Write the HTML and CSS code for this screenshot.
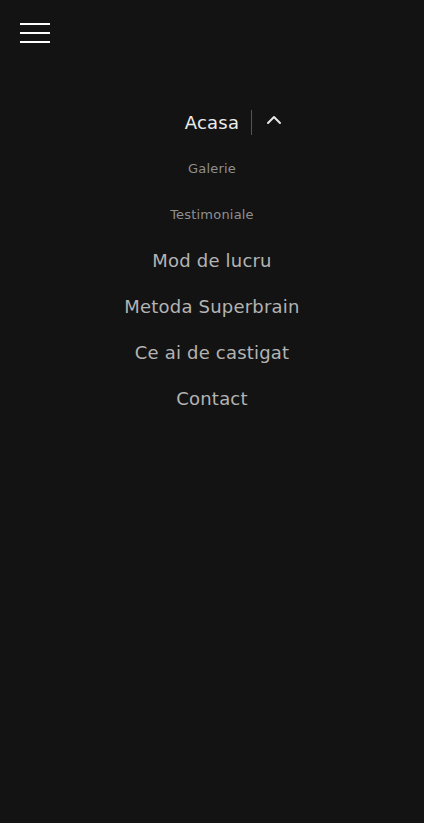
FILE: index.html
```html
<!DOCTYPE html>
<html lang="ro">
<head>
<meta charset="utf-8">
<title>Meniu</title>
<link rel="stylesheet" href="styles.css">
</head>
<body>
<header class="top">
  <button class="burger" aria-label="Meniu">
    <span></span><span></span><span></span>
  </button>
</header>
<nav class="menu">
  <ul class="list">
    <li class="item item-parent">
      <span class="spacer"></span>
      <a class="link link-main" href="#">Acasa</a>
      <span class="toggle">
        <span class="sep"></span>
        <svg class="chev" width="16" height="10" viewBox="0 0 16 10"><path d="M2 8 L8 2 L14 8" fill="none" stroke="#e6e6e6" stroke-width="2" stroke-linecap="round" stroke-linejoin="round"/></svg>
      </span>
    </li>
    <li class="item"><a class="link link-sub" href="#">Galerie</a></li>
    <li class="item"><a class="link link-sub" href="#">Testimoniale</a></li>
    <li class="item"><a class="link" href="#">Mod de lucru</a></li>
    <li class="item"><a class="link" href="#">Metoda Superbrain</a></li>
    <li class="item"><a class="link" href="#">Ce ai de castigat</a></li>
    <li class="item"><a class="link" href="#">Contact</a></li>
  </ul>
</nav>
</body>
</html>
```
FILE: styles.css
```css
html, body {
  margin: 0;
  padding: 0;
  background: #131313;
  height: 100%;
}
body {
  font-family: "DejaVu Sans", "Noto Sans", sans-serif;
  color: #b8b8b8;
}
.top {
  height: 99px;
  padding: 20px 0 0 20px;
  box-sizing: border-box;
}
.burger {
  display: flex;
  flex-direction: column;
  gap: 7px;
  width: 30px;
  padding: 3px 0 0 0;
  margin: 0;
  background: none;
  border: none;
}
.burger span {
  display: block;
  width: 30px;
  height: 2px;
  background: #ffffff;
}
.list {
  list-style: none;
  margin: 0;
  padding: 0;
}
.item {
  height: 46px;
  display: flex;
  align-items: center;
  justify-content: center;
}
.item-parent {
  display: grid;
  grid-template-columns: 1fr auto 1fr;
  align-items: center;
}
.toggle {
  display: flex;
  align-items: center;
  justify-self: start;
  padding-left: 12px;
  height: 100%;
}
.sep {
  width: 1px;
  height: 25px;
  background: #555;
}
.chev {
  margin-left: 14px;
  margin-top: -4px;
}
.link {
  text-decoration: none;
  color: #b3b3b3;
  font-size: 18px;
  letter-spacing: 0.2px;
}
.link-main {
  color: #ececec;
}
.link-sub {
  font-size: 13px;
  color: #8f8f8f;
}
```
